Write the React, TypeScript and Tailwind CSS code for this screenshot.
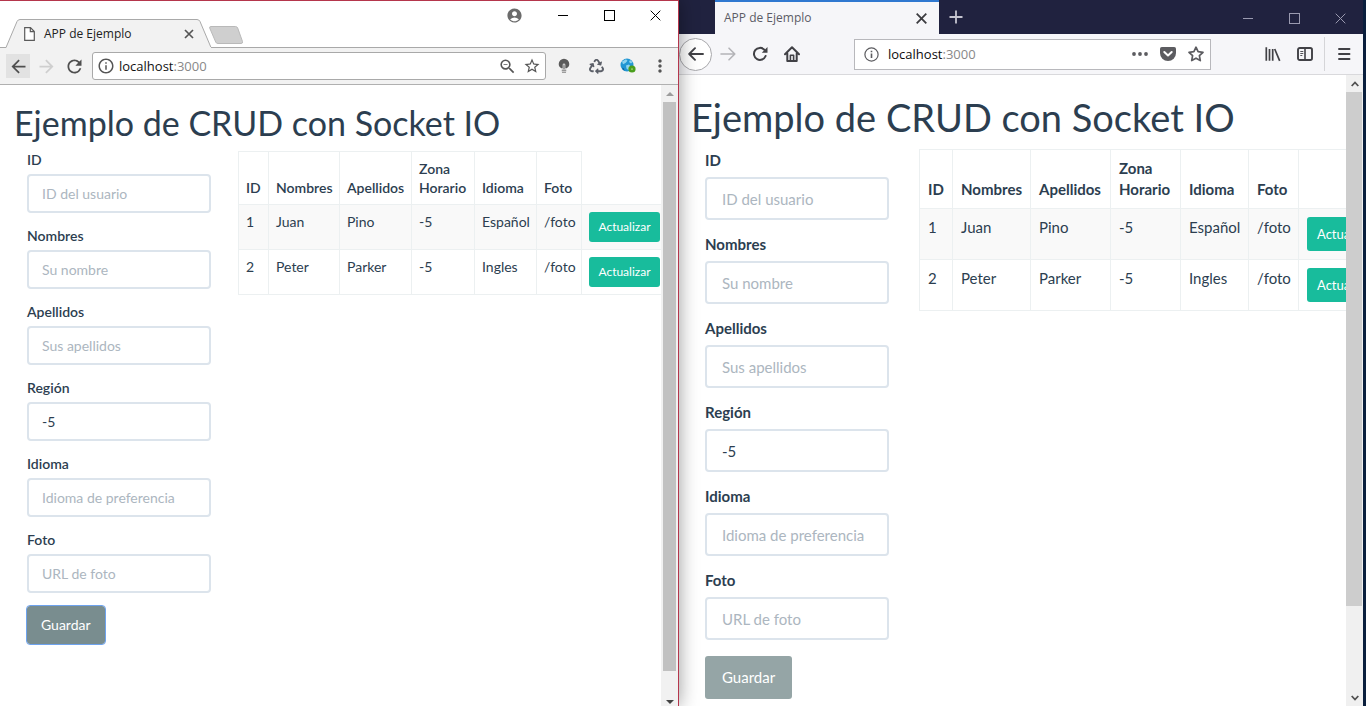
import React from "react";
import {
  MdAccountCircle,
  MdArrowBack,
  MdArrowForward,
  MdInfoOutline,
  MdMoreVert,
  MdRefresh,
  MdStarBorder,
  MdZoomOut,
} from "react-icons/md";
import { FaRecycle } from "react-icons/fa";

type Size = "compact" | "regular";

const fields = [
  { name: "id", label: "ID", placeholder: "ID del usuario", value: "" },
  { name: "nombres", label: "Nombres", placeholder: "Su nombre", value: "" },
  { name: "apellidos", label: "Apellidos", placeholder: "Sus apellidos", value: "" },
  { name: "region", label: "Región", placeholder: "", value: "-5" },
  { name: "idioma", label: "Idioma", placeholder: "Idioma de preferencia", value: "" },
  { name: "foto", label: "Foto", placeholder: "URL de foto", value: "" },
];

const headers = ["ID", "Nombres", "Apellidos", "Zona Horario", "Idioma", "Foto"];

const users = [
  ["1", "Juan", "Pino", "-5", "Español", "/foto"],
  ["2", "Peter", "Parker", "-5", "Ingles", "/foto"],
];

const styles = {
  compact: {
    page: "pt-[18px] pl-[14px]",
    title: "text-[34px] leading-10",
    body: "pl-[13px] gap-[27px] pt-[7px]",
    form: "text-sm",
    group: "h-[76px]",
    label: "font-semibold h-[24px] leading-5",
    input: "h-[39px] px-[13px]",
    save: "h-[38px] px-[14px] bg-[#798d8f] outline outline-1 outline-[#6ea3ee]",
    table: "w-[430px] text-sm leading-[19px] mt-[1px]",
    cols: ["w-[30px]", "w-[71px]", "w-[72px]", "w-[63px]", "w-[62px]", "w-[45px]", "w-[87px]"],
    head: "font-semibold",
    row: "h-[45px]",
    cell: "px-[7px] py-[7px]",
    action: "h-[30px] w-[71px] text-xs",
  },
  regular: {
    page: "pt-[21px] pl-3",
    title: "text-[38px] leading-[43px]",
    body: "pl-[14px] gap-[30px] pt-[10px]",
    form: "text-[15px]",
    group: "h-[84px]",
    label: "font-bold h-[28px] leading-[22px]",
    input: "h-[43px] px-[15px]",
    save: "h-[43px] mt-[3px] px-[17px] bg-[#95a5a6]",
    table: "w-[485px] text-[15px] leading-[21px]",
    cols: ["w-[33px]", "w-[78px]", "w-[80px]", "w-[70px]", "w-[68px]", "w-[50px]", "w-[106px]"],
    head: "font-bold",
    row: "h-[51px]",
    cell: "px-2 py-2",
    action: "h-[34px] px-[10px] text-[13px]",
  },
};

function CrudPage({ size }: { size: Size }) {
  const s = styles[size];
  return (
    <main
      className={`min-w-0 flex-1 overflow-hidden bg-white font-['Lato',sans-serif] text-[#2c3e50] ${s.page}`}
    >
      <h1 className={`whitespace-nowrap font-normal ${s.title}`}>Ejemplo de CRUD con Socket IO</h1>
      <div className={`flex items-start ${s.body}`}>
        <form className={`w-[184px] shrink-0 ${s.form}`} onSubmit={(e) => e.preventDefault()}>
          {fields.map((f) => (
            <div key={f.name} className={s.group}>
              <label htmlFor={`${size}-${f.name}`} className={`block ${s.label}`}>
                {f.label}
              </label>
              <input
                id={`${size}-${f.name}`}
                type="text"
                defaultValue={f.value}
                placeholder={f.placeholder}
                className={`block w-full rounded border-2 border-[#dce4ec] bg-white text-[#2c3e50] outline-none placeholder:text-[#acb6c0] ${s.input}`}
              />
            </div>
          ))}
          <button type="submit" className={`block rounded-[3px] text-white ${s.save}`}>
            Guardar
          </button>
        </form>
        <table className={`shrink-0 table-fixed border-collapse text-left ${s.table}`}>
          <colgroup>
            {s.cols.map((c, i) => (
              <col key={i} className={c} />
            ))}
          </colgroup>
          <thead>
            <tr>
              {headers.map((h) => (
                <th key={h} className={`border border-[#ecf0f1] align-bottom ${s.head} ${s.cell}`}>
                  {h}
                </th>
              ))}
              {size === "regular" && <td className="border border-[#ecf0f1]" />}
            </tr>
          </thead>
          <tbody>
            {users.map((u) => (
              <tr key={u[0]} className={`odd:bg-[#f9f9f9] ${s.row}`}>
                {u.map((v, i) => (
                  <td key={i} className={`border border-[#ecf0f1] align-top ${s.cell}`}>
                    {v}
                  </td>
                ))}
                <td className={`border border-[#ecf0f1] align-top ${s.cell}`}>
                  <button
                    type="button"
                    className={`block rounded-[3px] bg-[#18bc9c] text-white ${s.action}`}
                  >
                    Actualizar
                  </button>
                </td>
              </tr>
            ))}
          </tbody>
        </table>
      </div>
    </main>
  );
}

function Minimize() {
  return (
    <svg width="11" height="11" viewBox="0 0 11 11" stroke="currentColor" shapeRendering="crispEdges">
      <path d="M0 5.5h10" />
    </svg>
  );
}

function Maximize() {
  return (
    <svg width="11" height="11" viewBox="0 0 11 11" fill="none" stroke="currentColor" shapeRendering="crispEdges">
      <path d="M.5 .5h10v10h-10z" />
    </svg>
  );
}

function Cross({ className = "", width = 1 }: { className?: string; width?: number }) {
  return (
    <svg className={className} width="11" height="11" viewBox="0 0 11 11" stroke="currentColor" strokeWidth={width}>
      <path d="M.7 .7l9.6 9.6M10.3 .7L.7 10.3" />
    </svg>
  );
}

function WindowControls({ className }: { className: string }) {
  return (
    <div className={`flex ${className}`}>
      <button type="button" aria-label="Minimizar" className="flex w-[46px] items-center justify-center">
        <Minimize />
      </button>
      <button type="button" aria-label="Maximizar" className="flex w-[46px] items-center justify-center">
        <Maximize />
      </button>
      <button type="button" aria-label="Cerrar" className="flex w-[46px] items-center justify-center">
        <Cross />
      </button>
    </div>
  );
}

function ToolButton({
  label,
  className = "",
  children,
}: {
  label: string;
  className?: string;
  children: React.ReactNode;
}) {
  return (
    <button type="button" aria-label={label} className={`flex shrink-0 items-center justify-center ${className}`}>
      {children}
    </button>
  );
}

function BulbIcon() {
  return (
    <svg width="12" height="16" viewBox="0 0 12 16">
      <path fill="#5a5a5a" d="M6 .8a5.300 5.300 0 0 1 5.300 5.200c0 2.200-1.300 3.500-2.600 4.300H3.300C2 9.500.7 8.200.7 6A5.300 5.300 0 0 1 6 .8z" />
      <path fill="#c9c9c9" d="M4.600 7a1.400 1.400 0 0 1 2.800 0v3.300h.8v3.900H3.800v-3.900h.8z" />
      <path fill="#5a5a5a" d="M5.600 7.200h.8v4h-.8z" />
      <path stroke="#8a8a8a" strokeWidth=".8" d="M3.800 12.500h4.400M4 14.500h4" />
    </svg>
  );
}

function GlobeIcon() {
  return (
    <svg width="16" height="16" viewBox="0 0 16 16">
      <circle cx="7" cy="7" r="6.500" fill="#2196d3" />
      <path fill="#8ed3ee" d="M2 3.500l4-2.300 1.500 1.500L5.500 5 3 6.200zM6 7.500l3-1 1.500 2-2 3.800-2-1.800zM10 2l2.500 2-1.500 1.500L9 4z" />
      <path fill="#0d5f99" d="M2 9.500l2 1 .5 2.500A6.500 6.500 0 0 1 2 9.500z" />
      <circle cx="12" cy="11" r="3.600" fill="#4a9e1c" />
      <path fill="#a5d67a" d="M11 11.300l1-1.500 1 1.500-1 1z" />
    </svg>
  );
}

function Chrome() {
  return (
    <section className="relative z-10 flex min-w-0 flex-1 flex-col border-t border-r border-[#b5364c] bg-white shadow-[0_0_18px_rgba(0,0,0,0.4)]">
      <header className="flex h-[47px] items-end border-b border-[#a9a9a9] font-['Open_Sans',sans-serif]">
        <div className="relative -mb-px ml-[5px] flex h-[29px] w-[207px] items-center pr-[18px] pl-[19px]">
          <svg className="absolute inset-0" width="207" height="29" viewBox="0 0 207 29">
            <path
              d="M0 28.500h1L12 2.500Q13 .5 15 .5H192Q194 .5 195 2.500L206 28.500"
              fill="#f2f2f2"
              stroke="#a9a9a9"
            />
            <path d="M1.500 28.500H206" stroke="#f2f2f2" />
          </svg>
          <svg className="relative" width="11" height="14" viewBox="0 0 11 14" fill="#fff" stroke="#5a5a5a" strokeWidth="1.200">
            <path d="M.7 .7h5.800l3.800 3.800v8.800H.7zM6.300 .7v4h4" />
          </svg>
          <span className="relative ml-[9px] flex-1 text-[12px] leading-4 whitespace-nowrap text-[#222]">
            APP de Ejemplo
          </span>
          <button type="button" aria-label="Cerrar pestaña" className="relative text-[#555]">
            <svg width="10" height="10" viewBox="0 0 10 10" stroke="currentColor" strokeWidth="1.700">
              <path d="M1 1l8 8M9 1L1 9" />
            </svg>
          </button>
        </div>
        <button type="button" aria-label="Nueva pestaña" className="mb-[3px] -ml-[3px]">
          <svg width="34" height="18" viewBox="0 0 34 18">
            <path
              d="M2 .5h24.500Q28 .5 28.700 2L33.500 15.500Q34 17.500 32 17.500H9Q7.300 17.500 6.700 16L.7 2Q.3 .5 2 .5z"
              fill="#cfcfcf"
              stroke="#b9b9b9"
            />
          </svg>
        </button>
        <div className="ml-auto flex self-start">
          <ToolButton label="Perfil" className="w-[52px] text-[#6b6b6b]">
            <MdAccountCircle size={17} />
          </ToolButton>
          <WindowControls className="h-7 text-black" />
        </div>
      </header>
      <div className="flex h-[37px] items-center border-b border-[#b0b0b0] bg-[#f2f2f2] px-[6px]">
        <ToolButton label="Atrás" className="size-6 bg-[#e2e2e2] text-[#4f4f4f]">
          <MdArrowBack size={21} />
        </ToolButton>
        <ToolButton label="Adelante" className="ml-1 size-6 text-[#cfcfcf]">
          <MdArrowForward size={21} />
        </ToolButton>
        <ToolButton label="Recargar" className="ml-1 size-6 text-[#4f4f4f]">
          <MdRefresh size={21} />
        </ToolButton>
        <div className="mr-[6px] ml-[6px] flex h-7 min-w-0 flex-1 items-center rounded-[3px] border border-[#a9a9a9] bg-white px-1 text-[#555]">
          <MdInfoOutline size={18} />
          <span className="ml-1 flex-1 font-['Open_Sans',sans-serif] text-[13px] leading-5 text-[#111]">
            localhost<span className="text-[#888]">:3000</span>
          </span>
          <ToolButton label="Zoom" className="mr-[6px]">
            <MdZoomOut size={19} />
          </ToolButton>
          <ToolButton label="Favorito">
            <MdStarBorder size={18} />
          </ToolButton>
        </div>
        <div className="flex gap-2">
          <ToolButton label="Extensión" className="size-6">
            <BulbIcon />
          </ToolButton>
          <ToolButton label="Reciclar" className="size-6 text-[#5b5f68]">
            <FaRecycle size={15} />
          </ToolButton>
          <ToolButton label="Idioma" className="size-6">
            <GlobeIcon />
          </ToolButton>
          <ToolButton label="Menú" className="size-6 text-[#555]">
            <MdMoreVert size={20} />
          </ToolButton>
        </div>
      </div>
      <div className="flex flex-1">
        <CrudPage size="compact" />
        <div className="flex w-[17px] flex-col bg-[#f1f1f1]">
          <div className="flex h-[17px] items-center justify-center">
            <svg width="8" height="4" viewBox="0 0 8 4">
              <path d="M0 4l4-4 4 4z" fill="#9c9c9c" />
            </svg>
          </div>
          <div className="mx-[2px] flex-1 bg-[#c1c1c1]" />
          <div className="mt-[18px] flex h-[17px] items-center justify-center pt-2">
            <svg width="8" height="4" viewBox="0 0 8 4">
              <path d="M0 0h8L4 4z" fill="#444" />
            </svg>
          </div>
        </div>
      </div>
    </section>
  );
}

function Firefox() {
  return (
    <section className="flex w-[calc(50%+4px)] shrink-0 flex-col border-r-[3px] border-[#0a1f3d] bg-white font-['Open_Sans',sans-serif]">
      <header className="flex h-[34px] bg-[#20223f] pl-9">
        <div className="flex w-56 items-center border-t-2 border-[#2f78d0] bg-[#f6f6f9] pr-3 pl-[9px]">
          <span className="flex-1 text-[12px] leading-4 whitespace-nowrap text-[#5c5c66]">APP de Ejemplo</span>
          <button type="button" aria-label="Cerrar pestaña" className="text-[#3c3c40]">
            <Cross width={1.8} />
          </button>
        </div>
        <ToolButton label="Nueva pestaña" className="ml-[10px] text-[#c5c5d0]">
          <svg width="14" height="14" viewBox="0 0 14 14" stroke="currentColor" strokeWidth="1.800">
            <path d="M7 .5v13M.5 7h13" />
          </svg>
        </ToolButton>
        <WindowControls className="ml-auto pt-[2px] text-[#9a9ab0]" />
      </header>
      <div className="flex h-[41px] items-center border-b border-[#d9d9dc] bg-[#f6f6f9] pr-[3px] text-[#414146]">
        <ToolButton label="Atrás" className="size-[33px] rounded-full border border-[#a8a8ac] bg-white">
          <svg width="16" height="14" viewBox="0 0 16 14" fill="none" stroke="currentColor" strokeWidth="1.900" strokeLinecap="round" strokeLinejoin="round">
            <path d="M15 7H1.500M7 1.200L1.200 7 7 12.800" />
          </svg>
        </ToolButton>
        <ToolButton label="Adelante" className="size-8 text-[#b4b4b8]">
          <svg width="16" height="14" viewBox="0 0 16 14" fill="none" stroke="currentColor" strokeWidth="1.600" strokeLinecap="round" strokeLinejoin="round">
            <path d="M1 7h13.500M9 1.200L14.800 7 9 12.800" />
          </svg>
        </ToolButton>
        <ToolButton label="Recargar" className="size-8">
          <svg width="16" height="16" viewBox="0 0 16 16">
            <path d="M13.600 10A6 6 0 1 1 12.300 3.700" fill="none" stroke="currentColor" strokeWidth="2" strokeLinecap="round" />
            <path d="M15.500 1v5.700H9.800z" fill="currentColor" />
          </svg>
        </ToolButton>
        <ToolButton label="Inicio" className="size-8">
          <svg width="16" height="16" viewBox="0 0 16 16" fill="none" stroke="currentColor" strokeWidth="2" strokeLinecap="round" strokeLinejoin="round">
            <path d="M1 8.200L8 1.300l7 6.900M3.300 7.500V15h9.400V7.500" />
            <path d="M6.400 14V9.300h3.200V14" strokeWidth="1.600" />
          </svg>
        </ToolButton>
        <div className="mx-[46px] flex h-[31px] min-w-0 flex-1 items-center border border-[#b8b8bc] bg-white pr-[6px] pl-[9px] text-[#5c5c60]">
          <svg width="15" height="15" viewBox="0 0 15 15" fill="none" stroke="currentColor">
            <circle cx="7.500" cy="7.500" r="6.600" strokeWidth="1.200" />
            <path d="M7.500 6.500v4.500M7.500 3.800v1.500" strokeWidth="1.600" />
          </svg>
          <span className="ml-[9px] flex-1 text-[13px] leading-5 text-[#0c0c0d]">
            localhost<span className="text-[#888]">:3000</span>
          </span>
          <div className="flex gap-3">
            <ToolButton label="Acciones">
              <svg width="16" height="16" viewBox="0 0 16 16" fill="currentColor">
                <circle cx="2" cy="8" r="1.900" />
                <circle cx="8" cy="8" r="1.900" />
                <circle cx="14" cy="8" r="1.900" />
              </svg>
            </ToolButton>
            <ToolButton label="Pocket">
              <svg width="16" height="16" viewBox="0 0 16 16">
                <path d="M1.800 1h12.400Q16 1 16 2.800V7a8 8 0 0 1-16 0V2.800Q0 1 1.800 1z" fill="currentColor" />
                <path d="M4.300 6L8 9.500 11.700 6" fill="none" stroke="#fff" strokeWidth="2" strokeLinecap="round" strokeLinejoin="round" />
              </svg>
            </ToolButton>
            <ToolButton label="Marcador">
              <svg width="16" height="16" viewBox="0 0 16 16" fill="none" stroke="currentColor" strokeWidth="1.700" strokeLinejoin="round">
                <path d="M8 1.200l2.100 4.500 4.900.6-3.600 3.400.9 4.900L8 12.200l-4.300 2.400.9-4.900L1 6.300l4.900-.6z" />
              </svg>
            </ToolButton>
          </div>
        </div>
        <ToolButton label="Biblioteca" className="size-8">
          <svg width="16" height="16" viewBox="0 0 16 16" stroke="currentColor" strokeWidth="1.700">
            <path d="M1.300 1.200v13.600M4.500 3v11.800M7.700 3v11.800M9.700 3l5 11.800" />
          </svg>
        </ToolButton>
        <ToolButton label="Barra lateral" className="size-8">
          <svg width="16" height="14" viewBox="0 0 16 14" fill="none" stroke="currentColor">
            <rect x="1" y="1" width="14" height="12" rx="1.800" strokeWidth="1.900" />
            <path d="M8 1v12" strokeWidth="1.600" />
            <path d="M3.300 4.500h3M3.300 6.500h3M3.300 8.500h2" strokeWidth=".9" />
          </svg>
        </ToolButton>
        <div className="mx-[3px] h-[34px] w-px bg-[#d5d5d8]" />
        <ToolButton label="Menú" className="size-8">
          <svg width="14" height="14" viewBox="0 0 14 14" stroke="currentColor" strokeWidth="1.900" strokeLinecap="round">
            <path d="M2 2h10.500M2 7h10.500M2 12h10.500" />
          </svg>
        </ToolButton>
      </div>
      <div className="flex flex-1">
        <CrudPage size="regular" />
        <div className="flex w-[17px] flex-col bg-[#f0f0f0] text-[#505050]">
          <div className="flex h-[17px] items-center justify-center">
            <svg width="8" height="6" viewBox="0 0 8 6" fill="none" stroke="currentColor" strokeWidth="1.800">
              <path d="M.7 5L4 1.500 7.300 5" />
            </svg>
          </div>
          <div className="mr-px flex-1 bg-[#cdcdcd]" />
          <div className="mt-[84px] flex h-4 items-center justify-center">
            <svg width="8" height="6" viewBox="0 0 8 6" fill="none" stroke="currentColor" strokeWidth="1.800">
              <path d="M.7 1L4 4.500 7.300 1" />
            </svg>
          </div>
        </div>
      </div>
    </section>
  );
}

export default function App() {
  return (
    <div className="flex min-h-screen overflow-hidden">
      <Chrome />
      <Firefox />
    </div>
  );
}
